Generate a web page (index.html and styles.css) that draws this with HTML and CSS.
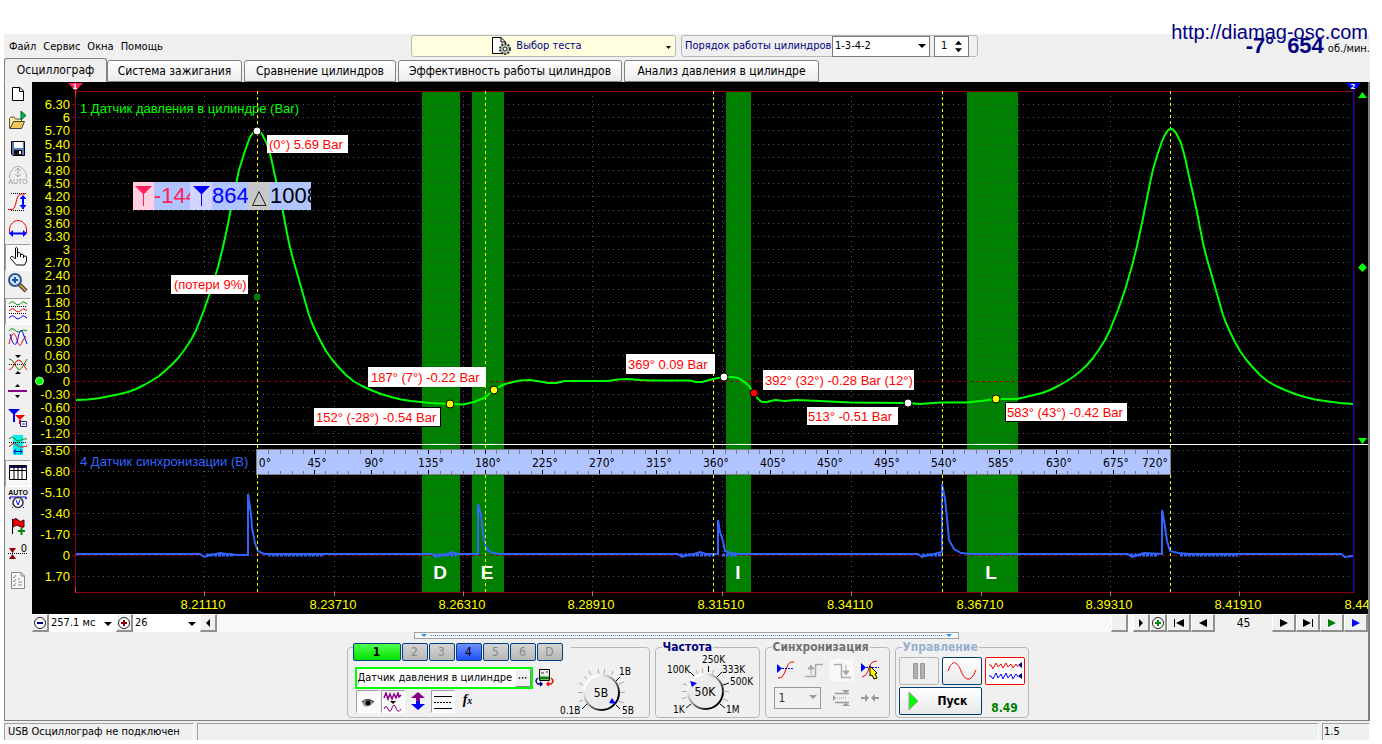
FILE: index.html
```html
<!DOCTYPE html>
<html lang="ru">
<head>
<meta charset="utf-8">
<title>USB Осциллограф</title>
<link rel="stylesheet" href="styles.css">
</head>
<body>
<a class="site-link" href="http://diamag-osc.com">http://diamag-osc.com</a>
<div class="app">
  <header class="topbar">
    <nav class="menu">
      <button>Файл</button><button>Сервис</button><button>Окна</button><button>Помощь</button>
    </nav>
    <div class="top-tools">
      <button class="test-picker">
        <svg width="22" height="20" viewBox="0 0 22 20"><path d="M1.500 1.500H10L14.500 6V17.500H1.500Z" fill="#fff" stroke="#000"/><path d="M10 1.500V6H14.500" fill="none" stroke="#000"/><circle cx="14" cy="13" r="5" fill="#b8ccb8" stroke="#333" stroke-width="2" stroke-dasharray="2 1.200"/><circle cx="14" cy="13" r="2" fill="#fff" stroke="#222"/></svg>
        <span>Выбор теста</span>
        <svg class="picker-arrow" width="5" height="3" viewBox="0 0 5 3"><path d="M0 0H5L2.500 3Z"/></svg>
      </button>
      <div class="order-group">
        <label for="order">Порядок работы цилиндров</label>
        <span class="pick order-pick"><select id="order"><option>1-3-4-2</option></select><svg class="pick-arrow" width="8" height="4" viewBox="0 0 8 4"><path d="M0 0H8L4 4Z"/></svg></span>
        <span class="spin"><input aria-label="Номер цилиндра" value="1"><svg width="8" height="13" viewBox="0 0 8 13"><path d="M0 4.500H8L4 0ZM0 8.500H8L4 13Z"/></svg></span>
      </div>
    </div>
    <div class="readout"><b>-7°</b><b>654</b><span>об./мин.</span></div>
  </header>

  <div class="tabs" role="tablist">
    <button role="tab" class="tab active">Осциллограф</button>
    <button role="tab" class="tab t2">Система зажигания</button>
    <button role="tab" class="tab t3">Сравнение цилиндров</button>
    <button role="tab" class="tab t4">Эффективность работы цилиндров</button>
    <button role="tab" class="tab t5">Анализ давления в цилиндре</button>
  </div>

  <div class="frame">
    <div class="work">
      <div class="toolbar">
        <button aria-label="Новый"><svg viewBox="0 0 20 20"><path d="M4.500 3.500H12L15.500 7V16.500H4.500Z" fill="#fff" stroke="#000"/><path d="M11.500 3.500V7.500H15.500" fill="none" stroke="#000"/></svg></button>
        <button aria-label="Открыть"><svg viewBox="0 0 20 20"><path d="M1.500 17.500V7.500L3 6H6L7.500 8H13.500V10" fill="#ffe9a0" stroke="#554"/><path d="M2 17.500L5.500 10.500H16.500L13.500 17.500Z" fill="#f0c65a" stroke="#443"/><path d="M13 0V9L18 4.500Z" fill="#0b3" stroke="#063"/></svg></button>
        <button aria-label="Сохранить"><svg viewBox="0 0 20 20"><path d="M3.500 3.500H16.500V17.500H5L3.500 16Z" fill="#567ab8" stroke="#000"/><path d="M6 4H15V10H6Z" fill="#fff"/><path d="M6 12H14V17H6Z" fill="#111"/><path d="M11 13H13V16H11Z" fill="#fff"/></svg></button>
        <button aria-label="Авто"><svg viewBox="0 0 20 20" fill="none" stroke="#aaa"><path d="M1.500 13V11C2 6 6 1.500 10 1.500S18 6 18.500 11V13M10 3V12M7 6L10 3L13 6M7 9L10 12L13 9"/><text x="10" y="19" class="auto-off">AUTO</text></svg></button>
        <button aria-label="Размах"><svg viewBox="0 0 20 20" fill="none"><path d="M3 1.500H18M3 18.500H17" stroke="#000" stroke-dasharray="1 1"/><path d="M0 17.500H4C9 17 7 3 13 2H17" stroke="#e00"/><path d="M15 4V17" stroke="#00f" stroke-width="2"/><path d="M11.500 7L15 3L18.500 7ZM11.500 13L15 17L18.500 13Z" fill="#00f"/></svg></button>
        <button aria-label="Период"><svg viewBox="0 0 20 20" fill="none"><path d="M1.500 14V10C2 5 6 1.500 10 1.500S18 5 18.500 10V14" stroke="#e00"/><path d="M3 14.500H17" stroke="#00f" stroke-width="2"/><path d="M5 11L1 14.500L5 18ZM15 11L19 14.500L15 18Z" fill="#00f"/></svg></button>
        <button class="pressed" aria-label="Рука"><svg viewBox="0 0 20 20"><path d="M7.500 11V2Q8.500 .5 9.500 2V8V7Q11.500 5.500 12.500 7.500V9Q14 7 15.500 9V10.500Q18 9 18.500 11V15L16.500 19H8.500L2.500 12.500Q2.500 9.500 5.500 11L7.500 13Z" fill="#fff" stroke="#000"/><path d="M9.500 7V11M12.500 8V11M15.500 9V12" stroke="#000"/></svg></button>
        <button aria-label="Лупа"><svg viewBox="0 0 20 20"><path d="M11 11L18 18" stroke="#333" stroke-width="4"/><path d="M12 12L17.500 17.500" stroke="#c9a24a" stroke-width="2"/><circle cx="7" cy="7" r="6" fill="#cfe4fb" stroke="#3a5488" stroke-width="2"/><path d="M4 7H10M7 4V10" stroke="#1e50a8" stroke-width="2"/></svg></button>
        <button class="pressed" aria-label="Сигналы"><svg viewBox="0 0 20 20" fill="none"><path d="M1 4C3 1 5 1 8 4S14 1 16 2L19 4" stroke="#080"/><path d="M1 11C4 8 5 8 8 11S14 8 16 9L19 11" stroke="#e00"/><path d="M1 18C4 15 5 15 8 18S14 15 16 16L19 18" stroke="#00f"/><path d="M1 6.500H19M1 13.500H19" stroke="#000" stroke-dasharray="1 1"/></svg></button>
        <button aria-label="Наложение"><svg viewBox="0 0 20 20" fill="none"><path d="M1 4C3 1 5 1 8 4S14 1 19 4" stroke="#080"/><path d="M1 17C4 3 7 5 9 13S13 19 15 13L18 9" stroke="#e00"/><path d="M2 7C5 19 8 21 10 11S14 2 16 9L19 17" stroke="#00f"/></svg></button>
        <button aria-label="Симметрия"><svg viewBox="0 0 20 20" fill="none"><path d="M1 10.500H19" stroke="#000" stroke-dasharray="1 1"/><path d="M1 5Q4 5 6 9T10 15T15 12T19 5" stroke="#080"/><path d="M1 16Q4 15 6 11T10 6T15 10T19 16" stroke="#e00"/><path d="M7 1H13L10 4ZM7 20H13L10 17Z" fill="#000"/></svg></button>
        <button aria-label="Разделитель"><svg viewBox="0 0 20 20"><path d="M0 10H19" stroke="#808" stroke-width="2"/><path d="M7 6H12L9.500 3ZM7 14H12L9.500 17Z"/></svg></button>
        <button aria-label="Маркеры"><svg viewBox="0 0 20 20"><path d="M0 1H12L6 7ZM5 5H7V14H5Z" fill="#00f"/><path d="M7 7H17L12 12ZM11 12H13V16H11Z" fill="#e00"/><path d="M12.500 13.500H18.500V18.500H12.500Z" fill="#fff" stroke="#228"/><path d="M14 16H17" stroke="#228"/></svg></button>
        <button aria-label="Область"><svg viewBox="0 0 20 20" fill="none"><path d="M5 0H15V20H5Z" fill="#0ee"/><path d="M1 4C4 1 5 2 8 5S14 3 19 4" stroke="#080"/><path d="M1 12C4 9 6 7 9 10S15 12 19 11" stroke="#e00"/><path d="M1 7.500H19" stroke="#000" stroke-dasharray="1 1"/><path d="M6 16.500H14M8 14L6 16.500L8 19M12 14L14 16.500L12 19" stroke="#00c"/></svg></button>
        <button class="pressed" aria-label="Таблица"><svg viewBox="0 0 20 20"><path d="M1.500 3.500H18.500V17.500H1.500Z" fill="#fff" stroke="#000"/><path d="M1 5H19" stroke="#116" stroke-width="2"/><path d="M1 8.500H19M6 4V17M10 4V17M14 4V17" stroke="#000"/></svg></button>
        <button aria-label="Авто вольт"><svg viewBox="0 0 20 20" fill="none"><text x="10" y="6" class="auto-on">AUTO</text><path d="M2 10V8H18V10M1 9L3 10M17 10L19 9" stroke="#00c"/><circle cx="10" cy="13.500" r="5" fill="#fff" stroke="#333" stroke-width="1.500"/><path d="M8 11L10 16L12 11M5 18L4 19M15 18L16 19" stroke="#00f"/></svg></button>
        <button aria-label="Флаг"><svg viewBox="0 0 20 20"><path d="M4.500 3V18" stroke="#000"/><path d="M5 4Q8 1 10 4T16 4V11Q13 12 11 10T5 11Z" fill="#e00" stroke="#400"/><path d="M10 15H17M13.500 12V19" stroke="#080" stroke-width="2"/></svg></button>
        <button aria-label="Ноль"><svg viewBox="0 0 20 20"><path d="M1 5H8L4.500 10ZM1 16H8L4.500 11Z" fill="#800"/><path d="M0 10.500H19" stroke="#000" stroke-dasharray="1 1"/><text x="16" y="9" class="zero">0</text></svg></button>
        <button aria-label="Отчёт"><svg viewBox="0 0 20 20" fill="none" stroke="#888"><path d="M3.500 2.500H13L16.500 6V18.500H3.500Z" fill="#f8f8f8"/><path d="M13 2.500V6H16.500M5 7L6 8L8 5M5 11L6 12L8 9M5 15L6 16L8 13M10 9H12M10 12H14M10 15H14" /></svg></button>
      </div>

      <svg class="scope" viewBox="32 82 1336 532" role="img" aria-label="Осциллограмма">
        <rect x="32" y="82" width="1336" height="532" fill="#000"/>
        <g fill="#008000"><path d="M422 92H460V592H422ZM472 92H504V592H472ZM726 92H751V592H726ZM967 92H1018V592H967Z"/></g>
        <g class="grid">
          <path d="M78 104.500H1353M78 117.500H1353M78 130.500H1353M78 144.500H1353M78 157.500H1353M78 170.500H1353M78 183.500H1353M78 196.500H1353M78 210.500H1353M78 223.500H1353M78 236.500H1353M78 249.500H1353M78 262.500H1353M78 275.500H1353M78 289.500H1353M78 302.500H1353M78 315.500H1353M78 328.500H1353M78 341.500H1353M78 355.500H1353M78 368.500H1353M78 394.500H1353M78 407.500H1353M78 420.500H1353M78 433.500H1353"/>
          <path d="M78 450.500H1353M78 471.500H1353M78 492.500H1353M78 513.500H1353M78 534.500H1353M78 576.500H1353"/>
          <path d="M204.500 96V592M334.500 96V592M463.500 96V592M592.500 96V592M722.500 96V592M851.500 96V592M981.500 96V592M1110.500 96V592M1239.500 96V592"/>
        </g>
        <path class="zero-line" d="M76 381.500H1353M76 555.500H1353"/>
        <path d="M75.500 91.500H1354M75.500 91V592.500H1354V91" fill="none" stroke="#900010"/>
        <path d="M72 104.500H76M72 117.500H76M72 130.500H76M72 144.500H76M72 157.500H76M72 170.500H76M72 183.500H76M72 196.500H76M72 210.500H76M72 223.500H76M72 236.500H76M72 249.500H76M72 262.500H76M72 275.500H76M72 289.500H76M72 302.500H76M72 315.500H76M72 328.500H76M72 341.500H76M72 355.500H76M72 368.500H76M72 381.500H76M72 394.500H76M72 407.500H76M72 420.500H76M72 433.500H76M72 450.500H76M72 471.500H76M72 492.500H76M72 513.500H76M72 534.500H76M72 555.500H76M72 576.500H76" stroke="#900010"/>
        <path d="M204.500 592V596M334.500 592V596M463.500 592V596M592.500 592V596M722.500 592V596M851.500 592V596M981.500 592V596M1110.500 592V596M1239.500 592V596" stroke="#888"/>
        <path d="M1353.500 84V592" stroke="#0000d0"/>
        <path d="M75.500 82V97M75.500 439V450M75.500 587V593" stroke="#ff2058"/>

        <g class="axis-y">
          <text x="70" y="109">6.30</text><text x="70" y="122">6</text><text x="70" y="135">5.70</text><text x="70" y="149">5.40</text><text x="70" y="162">5.10</text><text x="70" y="175">4.80</text><text x="70" y="188">4.50</text><text x="70" y="201">4.20</text><text x="70" y="215">3.90</text><text x="70" y="228">3.60</text><text x="70" y="241">3.30</text><text x="70" y="254">3</text><text x="70" y="267">2.70</text><text x="70" y="280">2.40</text><text x="70" y="294">2.10</text><text x="70" y="307">1.80</text><text x="70" y="320">1.50</text><text x="70" y="333">1.20</text><text x="70" y="346">0.90</text><text x="70" y="360">0.60</text><text x="70" y="373">0.30</text><text x="70" y="386">0</text><text x="70" y="399">-0.30</text><text x="70" y="412">-0.60</text><text x="70" y="425">-0.90</text><text x="70" y="438">-1.20</text>
          <text x="70" y="455">-8.50</text><text x="70" y="476">-6.80</text><text x="70" y="497">-5.10</text><text x="70" y="518">-3.40</text><text x="70" y="539">-1.70</text><text x="70" y="560">0</text><text x="70" y="581">1.70</text>
        </g>
        <g class="axis-x">
          <text x="203" y="609">8.21110</text><text x="333" y="609">8.23710</text><text x="462" y="609">8.26310</text><text x="591" y="609">8.28910</text><text x="721" y="609">8.31510</text><text x="850" y="609">8.34110</text><text x="980" y="609">8.36710</text><text x="1109" y="609">8.39310</text><text x="1238" y="609">8.41910</text><text x="1368" y="609">8.44510</text>
        </g>
        <text x="80" y="113" class="ch1">1 Датчик давления в цилиндре (Bar)</text>
        <text x="80" y="466" class="ch4">4 Датчик синхронизации (В)</text>
        <g class="phase"><text x="440" y="579">D</text><text x="487" y="579">E</text><text x="738" y="579">I</text><text x="991" y="579">L</text></g>

        <path class="sync" d="M76 554H200L204 557L210 555L216 554L220 553L226 554L238 555H248V494L251 514L252 528L255 543L258 551L264 554H432L436 557L442 555L448 554L452 552L458 554H478V504L481 515L484 540L487 550L493 553L500 554H678L682 557L688 555L694 554L700 552L706 554H718V520L720 532L723 541L725 551L731 553L740 554H918L922 557L928 555L934 554L942 552V484L945 499L947 518L949 540L954 549L961 553L970 554H1128L1132 557L1138 555L1144 553L1162 554V510L1164 520L1167 541L1170 551L1178 553L1190 554H1341L1345 557L1353 556"/>
        <path class="noise" d="M206 555H234M268 555H324M434 555H458M680 555H716M722 555H738M922 555H942M1130 555H1158M1180 555H1238"/>

        <path d="M32 444.500H1368" stroke="#fff"/>
        <path d="M257.500 91V592M485.500 91V592M713.500 91V592M942.500 91V592M1170.500 91V592" fill="none" stroke="#ff0" stroke-dasharray="3 3"/>

        <path class="pressure" d="M76 400L88 399.500L100 398L110 396L120 394L128 392L136 389L144 385L152 380.500L159 376L166 370L173 363.500L179 357L185 349L191 340L196 330.500L204 310L211 290L218 267L223 247L228 224L231 208L236 184L239 170L243 157L247 145L250 137L253 133L255 131L257 130.500L259 131L262 134L267 144L271 157.500L275 176L279 194L283 212L286 228L289 243L293 259L298 276.500L303 294L309 315L312 323L316 332L321 342L326 351L332 359.500L338 366.500L346 375L354 381.500L362 386L371 390L381 394L391 397L401 399.500L411 401L430 403L450 404L463 404.500L474 402L484 398L494 390L499 387L505 384L513 382L520 380.500L530 380L540 381.500L548 383L556 383L565 381H608L618 379.500L628 379L640 380L650 380.500H690L696 382H702L713 379L724 377L732 377L738 378L743 381L748 385L754 393L758 399L762 402H767L775 400L785 401L795 400L820 401L850 402.500L908 403L920 404L940 402.500H967L981 401L996 399H1017L1030 396L1042 393L1050 390L1058 386L1066 381.500L1073 377L1080 371.500L1087 365L1093 358L1099 349.500L1105 340L1110 330L1118 310L1125 290L1132 266L1137 246L1142 223L1145 208L1150 183L1153 169.500L1157 156L1161 144L1164 136.500L1167 131.500L1169 129.500L1171 129L1173 129.500L1176 133L1181 143L1185 157.500L1189 176L1193 194L1197 212L1200 228L1203 243L1207 259L1212 276.500L1217 294L1223 315L1226 323L1230 332L1235 342L1240 351L1246 359.500L1252 366.500L1260 375L1268 381.500L1276 386L1285 390L1295 394L1305 397L1315 399.500L1325 401L1340 403L1353 404"/>

        <rect x="256.500" y="449.500" width="914" height="25" fill="#b0c4ff" stroke="#808080"/>
        <path class="tick" d="M268.500 450V454M280.500 450V454M292.500 450V454M303.500 450V454M325.500 450V454M337.500 450V454M348.500 450V454M360.500 450V454M383.500 450V454M394.500 450V454M405.500 450V454M417.500 450V454M440.500 450V454M451.500 450V454M463.500 450V454M474.500 450V454M496.500 450V454M508.500 450V454M519.500 450V454M531.500 450V454M554.500 450V454M565.500 450V454M577.500 450V454M588.500 450V454M611.500 450V454M622.500 450V454M634.500 450V454M645.500 450V454M667.500 450V454M679.500 450V454M690.500 450V454M702.500 450V454M725.500 450V454M736.500 450V454M748.500 450V454M759.500 450V454M782.500 450V454M793.500 450V454M805.500 450V454M816.500 450V454M838.500 450V454M850.500 450V454M861.500 450V454M873.500 450V454M896.500 450V454M907.500 450V454M919.500 450V454M930.500 450V454M953.500 450V454M964.500 450V454M976.500 450V454M987.500 450V454M1010.500 450V454M1021.500 450V454M1033.500 450V454M1044.500 450V454M1067.500 450V454M1078.500 450V454M1090.500 450V454M1101.500 450V454M1124.500 450V454M1135.500 450V454M1147.500 450V454M1158.500 450V454"/>
        <path class="tick" d="M268.500 471V474M280.500 471V474M292.500 471V474M303.500 471V474M325.500 471V474M337.500 471V474M348.500 471V474M360.500 471V474M383.500 471V474M394.500 471V474M405.500 471V474M417.500 471V474M440.500 471V474M451.500 471V474M463.500 471V474M474.500 471V474M496.500 471V474M508.500 471V474M519.500 471V474M531.500 471V474M554.500 471V474M565.500 471V474M577.500 471V474M588.500 471V474M611.500 471V474M622.500 471V474M634.500 471V474M645.500 471V474M667.500 471V474M679.500 471V474M690.500 471V474M702.500 471V474M725.500 471V474M736.500 471V474M748.500 471V474M759.500 471V474M782.500 471V474M793.500 471V474M805.500 471V474M816.500 471V474M838.500 471V474M850.500 471V474M861.500 471V474M873.500 471V474M896.500 471V474M907.500 471V474M919.500 471V474M930.500 471V474M953.500 471V474M964.500 471V474M976.500 471V474M987.500 471V474M1010.500 471V474M1021.500 471V474M1033.500 471V474M1044.500 471V474M1067.500 471V474M1078.500 471V474M1090.500 471V474M1101.500 471V474M1124.500 471V474M1135.500 471V474M1147.500 471V474M1158.500 471V474"/>
        <path d="M314.500 450V454M371.500 450V454M428.500 450V454M485.500 450V454M542.500 450V454M599.500 450V454M656.500 450V454M713.500 450V454M770.500 450V454M827.500 450V454M885.500 450V454M942.500 450V454M999.500 450V454M1056.500 450V454M1113.500 450V454M314.500 470V474M371.500 470V474M428.500 470V474M485.500 470V474M542.500 470V474M599.500 470V474M656.500 470V474M713.500 470V474M770.500 470V474M827.500 470V474M885.500 470V474M942.500 470V474M999.500 470V474M1056.500 470V474M1113.500 470V474" stroke="#000"/>
        <g class="degrees">
          <text x="265" y="467">0°</text><text x="317" y="467">45°</text><text x="374" y="467">90°</text><text x="431" y="467">135°</text><text x="488" y="467">180°</text><text x="545" y="467">225°</text><text x="602" y="467">270°</text><text x="659" y="467">315°</text><text x="716" y="467">360°</text><text x="773" y="467">405°</text><text x="830" y="467">450°</text><text x="887" y="467">495°</text><text x="944" y="467">540°</text><text x="1001" y="467">585°</text><text x="1059" y="467">630°</text><text x="1116" y="467">675°</text><text x="1155" y="467">720°</text>
        </g>

        <g class="note">
          <rect x="267" y="135" width="81" height="18"/><text x="269" y="149">(0°) 5.69 Bar</text>
          <rect x="171" y="275" width="77" height="19"/><text x="174" y="289">(потери 9%)</text>
          <rect x="368" y="367" width="118" height="20"/><text x="371" y="382">187° (7°) -0.22 Bar</text>
          <rect x="313.500" y="407.500" width="127" height="19" stroke="#000"/><text x="316" y="422">152° (-28°) -0.54 Bar</text>
          <rect x="626" y="354" width="89" height="20"/><text x="628" y="369">369° 0.09 Bar</text>
          <rect x="763" y="370" width="151" height="20"/><text x="765" y="385">392° (32°) -0.28 Bar (12°)</text>
          <rect x="807" y="407" width="91" height="18"/><text x="808" y="421">513° -0.51 Bar</text>
          <rect x="1005.500" y="402.500" width="122" height="19" stroke="#000"/><text x="1007" y="417">583° (43°) -0.42 Bar</text>
        </g>
        <g stroke="#000">
          <circle cx="257" cy="131" r="4" fill="#fff"/><circle cx="257" cy="297" r="4" fill="#008000"/>
          <circle cx="450" cy="404" r="4" fill="#ff0"/><circle cx="494" cy="390" r="4" fill="#ff0"/>
          <circle cx="724" cy="377" r="4" fill="#fff"/><circle cx="754" cy="393" r="4" fill="#f00"/>
          <circle cx="908" cy="403" r="4" fill="#fff"/><circle cx="996" cy="399" r="4" fill="#ff0"/>
        </g>
        <circle cx="39.500" cy="381" r="4" fill="#0f0" stroke="#aea"/>
        <path d="M1358 98H1367L1362.500 92ZM1358 438H1367L1362.500 444ZM1362.500 263L1367 267.500L1362.500 272L1358 267.500Z" fill="#0f0"/>
        <path d="M68 83H83L75.500 91Z" fill="#ff2058"/><text x="75" y="89" class="flag-no">1</text>
        <path d="M1346 83H1361L1353.500 91Z" fill="#00f"/><text x="1353" y="89" class="flag-no">2</text>

        <rect x="133" y="182" width="178" height="28" fill="#b0c4ff"/>
        <rect x="133" y="182" width="21" height="28" fill="#ffd0e0"/><rect x="190" y="182" width="22" height="28" fill="#d0d4ff"/><rect x="248" y="182" width="22" height="28" fill="#c8c8c8"/>
        <path d="M135 186H152L144 194V206H143V194Z" fill="#ff2058"/><path d="M193 186H210L202 194V206H201V194Z" fill="#00f"/><path d="M252.500 205.500L259 191.500L266 205.500Z" fill="none" stroke="#222"/>
        <svg x="154" y="182" width="36" height="28"><text x="0" y="21" class="measure" fill="#ff2058">-144</text></svg>
        <svg x="212" y="182" width="36" height="28"><text x="0" y="21" class="measure" fill="#00f">864</text></svg>
        <svg x="270" y="182" width="41" height="28"><text x="0" y="21" class="measure" fill="#000">1008</text></svg>
      </svg>
    </div>

    <div class="scrollrow">
      <button class="sq" aria-label="Уменьшить"><svg width="14" height="14" viewBox="0 0 14 14"><circle cx="7" cy="7" r="5.500" fill="#fff" stroke="#222"/><path d="M4 7H10" stroke="#008" stroke-width="2"/></svg></button>
      <span class="pick scale"><select aria-label="Развёртка"><option>257.1 мс</option></select><svg class="pick-arrow" width="8" height="4" viewBox="0 0 8 4"><path d="M0 0H8L4 4Z"/></svg></span>
      <button class="sq" aria-label="Увеличить"><svg width="14" height="14" viewBox="0 0 14 14"><circle cx="7" cy="7" r="5.500" fill="#fff" stroke="#222"/><path d="M4 7H10M7 4V10" stroke="#800" stroke-width="2"/></svg></button>
      <span class="pick scale"><select aria-label="Кадр"><option>26</option></select><svg class="pick-arrow" width="8" height="4" viewBox="0 0 8 4"><path d="M0 0H8L4 4Z"/></svg></span>
      <button class="sq" aria-label="Влево"><svg width="8" height="8" viewBox="0 0 8 8"><path d="M6 0V8L2 4Z"/></svg></button>
      <div class="track"><span class="thumb"></span></div>
      <button class="sq" aria-label="Вправо"><svg width="8" height="8" viewBox="0 0 8 8"><path d="M2 0V8L6 4Z"/></svg></button>
      <button class="sq" aria-label="Добавить"><svg width="14" height="14" viewBox="0 0 14 14"><circle cx="7" cy="7" r="5.500" fill="#fff" stroke="#222"/><path d="M4 7H10M7 4V10" stroke="#080" stroke-width="2"/></svg></button>
      <button class="nav" aria-label="Начало"><svg width="12" height="8" viewBox="0 0 12 8"><path d="M1 0H2V8H1ZM11 0V8L3 4Z"/></svg></button>
      <button class="nav" aria-label="Назад"><svg width="12" height="8" viewBox="0 0 12 8"><path d="M10 0V8L2 4Z"/></svg></button>
      <output class="frame-no">45</output>
      <button class="nav" aria-label="Далее"><svg width="12" height="8" viewBox="0 0 12 8"><path d="M2 0V8L10 4Z"/></svg></button>
      <button class="nav" aria-label="Конец"><svg width="12" height="8" viewBox="0 0 12 8"><path d="M1 0V8L9 4ZM10 0H11V8H10Z"/></svg></button>
      <button class="nav" aria-label="Воспроизвести"><svg width="12" height="8" viewBox="0 0 12 8"><path d="M2 0V8L10 4Z" fill="#008000"/></svg></button>
      <button class="nav" aria-label="Воспроизвести всё"><svg width="12" height="8" viewBox="0 0 12 8"><path d="M2 0V8L10 4Z" fill="#00f"/></svg></button>
    </div>

    <div class="splitter"><i class="grip"></i><i class="dots"></i><i class="grip"></i></div>

    <div class="controls">
      <section class="box channel">
        <div class="channel-main">
          <div class="ch-buttons"><button class="on1">1</button><button>2</button><button>3</button><button class="on4">4</button><button>5</button><button>6</button><button>D</button></div>
          <div class="ch-name"><div class="name-box"><input aria-label="Название канала" value="Датчик давления в цилиндре"><button aria-label="Выбрать датчик">•••</button></div>
            <button class="flat" aria-label="Заменить"><svg width="20" height="20" viewBox="0 0 20 20" fill="none"><path d="M4.500 1.500H14.500V12.500H4.500Z" fill="#eee" stroke="#000"/><path d="M5 10H14" stroke="#080" stroke-width="3"/><path d="M6 5H9M11 4H13" stroke="#333"/><path d="M3 10Q-1 13 3 16H7M5 14L7 16L5 18" stroke="#008" stroke-width="1.500"/><path d="M16 10Q20 13 16 16H12M14 14L12 16L14 18" stroke="#f00" stroke-width="1.500"/></svg></button></div>
          <div class="ch-tools">
            <button class="down" aria-label="Видимость"><svg width="20" height="20" viewBox="0 0 20 20"><path d="M4 10Q8 6 14 8L16 10Q11 16 6 14Z" fill="#9a9188"/><path d="M4 10Q9 5 16 10" fill="none" stroke="#222"/><circle cx="10" cy="11" r="2.500"/></svg></button>
            <button class="down" aria-label="Фильтр"><svg width="20" height="20" viewBox="0 0 20 20" fill="none" stroke="#808"><path d="M1 6L3 1L5 7L7 2L9 7L11 2L13 6L15 1L16 5L18 3" stroke-width="1.500"/><path d="M7 9H13L10 12Z" fill="#000" stroke="none"/><path d="M1 17Q3 12 5 17T9 16T13 16T18 17"/></svg></button>
            <button class="flat" aria-label="Инверсия"><svg width="20" height="20" viewBox="0 0 20 20"><path d="M10 1L17 7H12V10H8V7H3Z" fill="#808"/><path d="M10 19L17 13H12V10H8V13H3Z" fill="#00f"/></svg></button>
            <button class="down" aria-label="Линии"><svg width="20" height="20" viewBox="0 0 20 20" stroke="#000"><path d="M1 4.500H19M1 16.500H19"/><path d="M1 10.500H19" stroke-dasharray="2 1"/></svg></button>
            <button class="flat fx" aria-label="Функция"><i>f</i><small>x</small></button>
          </div>
        </div>
        <svg class="knob" width="88" height="58" viewBox="558 660 88 58">
          <defs><linearGradient id="rim" x1="0" y1="0" x2="1" y2="1"><stop offset="0.200" stop-color="#fff"/><stop offset="0.500" stop-color="#888"/><stop offset="0.800" stop-color="#000"/></linearGradient></defs>
          <circle cx="600.500" cy="692.500" r="17.500" fill="#ececec" stroke="url(#rim)" stroke-width="2"/>
          <path d="M577 692.500H582M578 683L582 685M583 676L586 679M588 671L590 675M597 669L598 674M604 669L603 674M612 671L611 675M618 684L623 682M619 692.500H624M618 701L623 703M578 702L582 700" stroke="#aaa"/><path d="M615 681L619 677M615 705L619 709M581 709L586 704" stroke="#000"/>
          <path d="M608 703L611 698L615 704Z" fill="#00f"/>
          <text x="600" y="697" class="knob-value">5В</text><text x="618" y="675">1В</text><text x="621" y="714">5В</text><text x="559" y="714">0.1В</text>
        </svg>
      </section>

      <fieldset class="box freq"><legend>Частота</legend>
        <svg class="knob" width="98" height="64" viewBox="658 654 98 64">
          <circle cx="704.500" cy="692.500" r="17.500" fill="#ececec" stroke="url(#rim)" stroke-width="2"/>
          <path d="M681 692.500H686M682 685L686 686M695 671L697 675M701 669L702 674M713 671L711 675M722 692.500H728M721 699L727 702M681 700L686 698" stroke="#aaa"/><path d="M707.500 667V673M689 673L693 677M716 678L721 673M722 686L728 684M685 709L690 705M719 705L724 709" stroke="#000"/>
          <path d="M689 682L696 684L691 688Z" fill="#00f"/>
          <text x="704" y="697" class="knob-value">50K</text><text x="701" y="664">250K</text><text x="666" y="674">100K</text><text x="721" y="674">333K</text><text x="729" y="686">500K</text><text x="672" y="714">1K</text><text x="725" y="714">1M</text>
        </svg>
      </fieldset>

      <fieldset class="box sync-box"><legend>Синхронизация</legend>
        <div class="sync-grid">
          <button class="flat" aria-label="Уровень"><svg width="20" height="20" viewBox="0 0 20 20" fill="none"><path d="M2 18Q6 19 8 14L11 7Q13 1 18 2" stroke="#e00"/><path d="M3 8.500H18" stroke="#00c" stroke-dasharray="2 1"/><path d="M1 4V13L6 8.500Z" fill="#00f"/></svg></button>
          <button class="flat" aria-label="Фронт"><svg width="20" height="20" viewBox="0 0 20 20" fill="none" stroke="#aaa"><path d="M1 16.500H11.500V4.500H19" stroke-width="1.500"/><path d="M7 15V6M4 9L7 5L10 9Z" fill="#aaa"/></svg></button>
          <button class="flat lit" aria-label="Спад"><svg width="20" height="20" viewBox="0 0 20 20" fill="none" stroke="#aaa"><path d="M2 4.500H9.500V17.500H19" stroke-width="1.500"/><path d="M14 5V14M11 11L14 15L17 11Z" fill="#aaa"/></svg></button>
          <button class="flat" aria-label="Курсор"><svg width="20" height="20" viewBox="0 0 20 20" fill="none"><path d="M2 17Q6 17 8 11L10 5Q12 1 17 1" stroke="#e00"/><path d="M3 7.500H19" stroke="#00c" stroke-dasharray="2 1"/><path d="M1 3V12L6 7.500Z" fill="#00f"/><path d="M10 6L17 13L15 14L17 18L14 19L12 15L10 16Z" fill="#ff0" stroke="#000"/></svg></button>
          <span class="pick src"><select aria-label="Канал синхронизации" disabled><option>1</option></select><svg class="pick-arrow" width="8" height="4" viewBox="0 0 8 4"><path d="M0 0H8L4 4Z" fill="#999"/></svg></span>
          <button class="flat" aria-label="Диапазон"><svg width="20" height="20" viewBox="0 0 20 20" fill="none" stroke="#999"><path d="M3 5.500H17M3 14.500H17" stroke-width="1.500"/><path d="M5 10H15" stroke-dasharray="1 1"/><path d="M1 7V13L4 10ZM10 2H18L14 5ZM10 18H18L14 15Z" fill="#999" stroke="none"/></svg></button>
          <button class="flat" aria-label="Сжать"><svg width="20" height="20" viewBox="0 0 20 20" fill="#999"><path d="M1 9H5V6L9 10L5 14V11H1ZM19 9H15V6L11 10L15 14V11H19Z"/></svg></button>
        </div>
      </fieldset>

      <fieldset class="box manage"><legend>Управление</legend>
        <div class="manage-grid">
          <button class="mb off" aria-label="Пауза"><svg width="14" height="18" viewBox="0 0 14 18"><path d="M1.500 1.500H5.500V16.500H1.500ZM8.500 1.500H12.500V16.500H8.500Z" fill="#b0b0b0" stroke="#999"/></svg></button>
          <button class="mb" aria-label="Синусоида"><svg width="30" height="20" viewBox="0 0 30 20"><path d="M1 10C5 -2 10 0 14 10S24 22 29 9" fill="none" stroke="#e00"/></svg></button>
          <button class="mb red" aria-label="Поток"><svg width="34" height="22" viewBox="0 0 34 22" fill="none"><path d="M1 5H3L5 9L8 3L10 7L13 4L15 8L18 3L20 7L23 4L25 8L28 4L30 7" stroke="#e00"/><path d="M1 16H3L5 19L8 13L10 18L13 14L15 19L18 13L20 18L23 14L25 19L28 14L30 17" stroke="#00f"/><path d="M34 2V8L30 5ZM34 13V19L30 16Z" fill="#008"/></svg></button>
          <button class="mb start"><svg width="12" height="20" viewBox="0 0 12 20"><path d="M1 1V19L10 10Z" fill="#0f0" stroke="#999"/></svg><span>Пуск</span></button>
          <output class="ver">8.49</output>
        </div>
      </fieldset>
    </div>
  </div>

  <footer class="status"><span class="s1">USB Осциллограф не подключен</span><span class="s2"></span><span class="s3">1.5</span></footer>
</div>
</body>
</html>
```
FILE: styles.css
```css
* { box-sizing: border-box; }
body {
  margin: 0;
  padding: 34px 12px 4px 4px;
  background: #fff;
  color: #000;
  font: 11px/14px "DejaVu Sans Condensed", "Liberation Sans", sans-serif;
}
button, input, select { font: inherit; color: inherit; margin: 0; padding: 0; }
button { border: 0; background: none; border-radius: 0; }
svg { display: block; }

.app { background: #f0f0f0; }

.site-link {
  position: absolute;
  top: 20px;
  right: 14px;
  color: #000080;
  font: 20px/24px "Liberation Sans", Arial, sans-serif;
  text-decoration: none;
}

.topbar { display: grid; grid-template-columns: 407px auto 1fr; height: 24px; }
.menu { display: flex; align-items: center; gap: 7px; padding: 2px 0 0 5px; }
.top-tools { display: flex; gap: 5px; align-items: flex-start; }
.test-picker {
  display: flex; align-items: center; justify-content: center; gap: 3px;
  width: 265px; height: 22px; margin-top: 1px; padding-right: 14px;
  background: #ffffe0; border: 1px solid #b8b8b8; border-radius: 3px;
  color: #000080; position: relative;
}
.picker-arrow { position: absolute; right: 4px; top: 10px; }
.order-group {
  display: flex; align-items: center; gap: 4px;
  width: 297px; height: 22px; margin-top: 1px; padding-left: 3px;
  border: 1px solid #b8b8b8; border-radius: 3px; color: #000080;
}
.order-group label { width: 143px; white-space: nowrap; }
.pick { position: relative; display: block; color: #000; }
.pick select {
  appearance: none; display: block; width: 100%; height: 100%;
  padding: 0 12px 0 2px; border: 0; border-radius: 0; background: #fff;
}
.pick-arrow { position: absolute; right: 4px; top: 8px; pointer-events: none; }
.order-pick { width: 98px; height: 21px; }
.order-pick select { border: 1px solid #777; }
.spin {
  display: flex; align-items: center; gap: 4px; width: 35px; height: 21px;
  padding: 0 6px; background: #fff; border: 1px solid #777; color: #000;
}
.spin input { width: 10px; border: 0; background: none; }
.readout {
  display: flex; justify-content: flex-end; align-items: center; gap: 4px;
  color: #000080; font: bold 22px/24px "Liberation Sans", Arial, sans-serif;
}
.readout b + b { margin-left: 9px; }
.readout span { font: 11px/14px "DejaVu Sans Condensed", "Liberation Sans", sans-serif; color: #000; padding-top: 5px; }

.tabs { display: flex; align-items: flex-end; gap: 2px; height: 24px; font: 12px/16px "DejaVu Sans Condensed", "Liberation Sans", sans-serif; }
.tab {
  height: 22px; border: 1px solid #808080; border-radius: 3px 3px 0 0;
  background: linear-gradient(#fff, #ececec); white-space: nowrap;
}
.tab.active { width: 103px; height: 24px; background: #f0f0f0; border-bottom-color: #f0f0f0; margin-right: -2px; }
.t2 { width: 135px; }
.t3 { width: 152px; }
.t4 { width: 224px; }
.t5 { width: 195px; }

.frame { border: 1px solid #808080; border-top: 0; border-right-width: 2px; }
.work { display: flex; }
.toolbar { display: flex; flex-direction: column; width: 27px; flex: none; }
.toolbar button { display: grid; place-items: center; height: 27px; width: 26px; padding-bottom: 3px; }
.toolbar button svg { width: 20px; height: 20px; }
.pressed { background: #f8f8f8; border: 1px solid #a0a0a0; border-right-color: #fff; border-bottom-color: #fff; }
.auto-off, .auto-on { font: 7px "Liberation Sans", sans-serif; text-anchor: middle; fill: #999; stroke: none; }
.auto-on { fill: #000; font-weight: bold; }
.zero { font: 11px "DejaVu Sans Condensed", sans-serif; text-anchor: middle; }

.scope { flex: 1; min-width: 0; width: 100%; height: auto; font: 13px "Liberation Sans", Arial, sans-serif; }
.grid { fill: none; stroke: #585858; stroke-dasharray: 1 4; }
.zero-line { stroke: #900010; stroke-dasharray: 3 3; }
.axis-y { fill: #ff0; text-anchor: end; }
.axis-x { fill: #ff0; text-anchor: middle; }
.ch1 { fill: #0f0; }
.ch4 { fill: #3264ff; }
.phase { fill: #fff; font-weight: bold; font-size: 19px; text-anchor: middle; }
.sync { fill: none; stroke: #3264ff; stroke-width: 2; }
.noise { stroke: #3264ff; stroke-width: 3; stroke-dasharray: 3 1; fill: none; }
.pressure { fill: none; stroke: #0f0; stroke-width: 2; stroke-linejoin: round; }
.tick { stroke: #777; }
.degrees { font: 12px "DejaVu Sans Condensed", sans-serif; text-anchor: middle; fill: #000; }
.note rect { fill: #fff; }
.note text { fill: #f00; }
.flag-no { font: bold 7px "DejaVu Sans", sans-serif; fill: #fff; text-anchor: middle; }
.measure { font-size: 22px; }

.scrollrow { display: flex; height: 18px; padding-left: 27px; }
.sq, .nav, .thumb {
  display: grid; place-items: center; width: 17px; height: 18px; background: #f0f0f0;
  border: 1px solid #fff; border-right: 2px solid #909090; border-bottom: 2px solid #909090; flex: none;
}
.nav { width: 24px; }
.scale { width: 67px; height: 18px; }
.scale .pick-arrow { top: 8px; }
.track { display: flex; justify-content: flex-end; flex: 1; background: #f8f8f8; padding-right: 5px; }
.frame-no { width: 57px; text-align: center; line-height: 18px; font-size: 12px; }

.splitter {
  display: flex; align-items: center; gap: 4px; width: 545px; height: 7px; margin: 0 auto;
  padding: 0 6px; border: 1px solid #a0a0a0; background: #f8f8f8;
}
.grip { width: 0; border: 3px solid transparent; border-top: 3px solid #3090e8; border-bottom: 0; }
.dots { flex: 1; border-top: 1px dotted #3090e8; }

.controls { display: flex; justify-content: center; gap: 5px; height: 81px; padding: 0 0 2px 2px; }
.box { min-width: 0; margin: 0; padding: 0; border: 1px solid #b8b8b8; border-radius: 4px; }
.box legend { margin-left: 6px; padding: 0 1px; font-weight: bold; font-size: 12px; line-height: 16px; height: 16px; white-space: nowrap; }
.channel { display: flex; width: 303px; margin-top: 8px; }
.channel-main { width: 207px; flex: none; padding-left: 5px; }
.ch-buttons { display: flex; gap: 1px; width: 218px; margin-top: -5px; background: #f0f0f0; position: relative; }
.ch-buttons button {
  width: 26px; height: 18px; color: #888; font-size: 12px; line-height: 14px;
  border: 1px solid #004080; border-radius: 2px; background: linear-gradient(#d4d4d4, #b8b8b8);
}
.ch-buttons .on1 { width: 48px; color: #000; font-weight: bold; background: linear-gradient(#50ff50, #00e000); }
.ch-buttons .on4 { color: #000; background: linear-gradient(#7090ff, #2050ff); }
.ch-name { display: flex; align-items: center; gap: 2px; margin-top: 6px; }
.name-box { display: flex; width: 178px; height: 22px; flex: none; border: 2px solid #0f0; background: #fff; margin-left: 2px; }
.name-box input { flex: 1; min-width: 0; border: 0; padding: 0 0 0 1px; background: none; }
.name-box button { width: 16px; font-size: 6px; background: #f0f0f0; border: 1px solid #fff; border-right-color: #888; border-bottom-color: #888; }
.flat { display: grid; place-items: center; width: 24px; height: 22px; }
.lit { background: #f8f8f8; }
.ch-tools { display: flex; gap: 1px; margin: 1px 0 0 3px; }
.down { display: grid; place-items: center; width: 24px; height: 23px; background: #fafafa; border: 1px solid #a0a0a0; border-right-color: #fff; border-bottom-color: #fff; }
.fx { display: flex; align-items: baseline; justify-content: center; font: bold 14px/20px "Liberation Serif", serif; }
.fx small { font-size: 10px; font-style: italic; }
.knob { font: 10px "DejaVu Sans Condensed", sans-serif; }
.channel .knob { margin: 12px 0 0 4px; }
.knob-value { font-size: 12px; text-anchor: middle; }
.freq { width: 105px; }
.freq legend { color: #000080; }
.freq .knob { margin: -2px 0 0 3px; }
.sync-box { width: 125px; }
.sync-box legend { color: #707070; }
.sync-grid { display: grid; grid-template-columns: 24px 24px 24px 24px; justify-content: space-between; padding: 4px 7px 0 8px; row-gap: 6px; align-items: center; }
.src { grid-column: span 2; width: 47px; height: 22px; }
.src select { border: 1px solid #999; background: #f0f0f0; color: #333; padding-left: 4px; font-size: 12px; opacity: 1; }
.manage { width: 134px; }
.manage legend { color: #98b0d0; }
.manage-grid { display: grid; grid-template-columns: 40px 40px 40px; gap: 2px 3px; padding: 2px 0 0 3px; }
.mb { display: grid; place-items: center; height: 28px; background: linear-gradient(#fff, #e8e8e8); border: 1px solid #003c74; border-radius: 2px; }
.mb.off { border-color: #b8b8b8; background: #f0f0f0; }
.mb.red { border: 1px solid #f00; background: #fff; }
.start { grid-column: span 2; display: flex; align-items: center; padding-left: 8px; gap: 18px; font-weight: bold; font-size: 12px; }
.ver { color: #008000; font-weight: bold; font-size: 12px; align-self: end; justify-self: center; }

.status { display: flex; gap: 3px; height: 19px; padding-top: 2px; }
.status span { border: 1px solid #a0a0a0; border-right-color: #fff; border-bottom: 0; padding: 1px 3px; white-space: nowrap; }
.status .s1 { width: 190px; }
.status .s2 { flex: 1; }
.status .s3 { width: 48px; padding-left: 1px; }
```
